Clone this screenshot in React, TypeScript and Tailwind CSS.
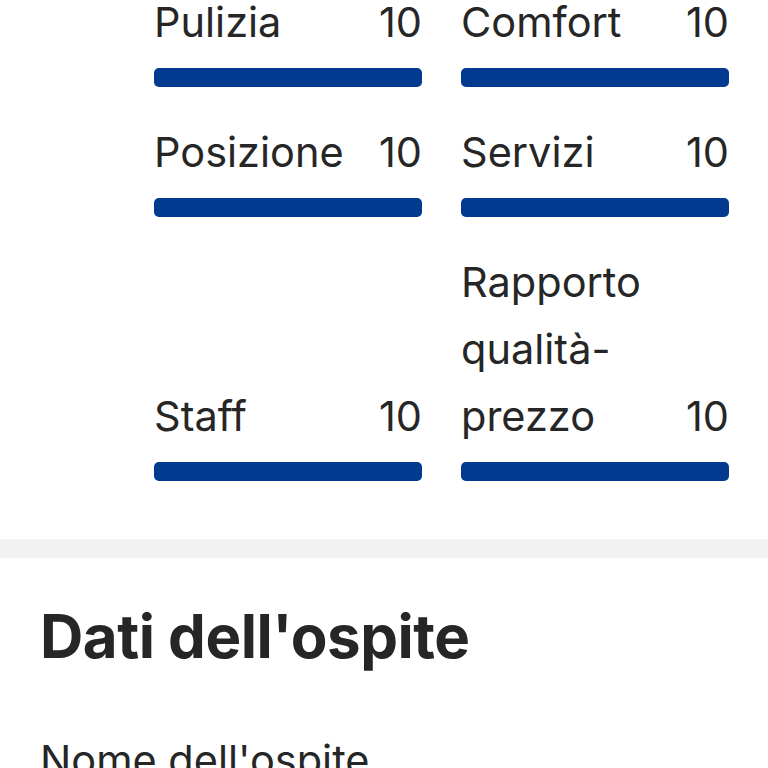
import React from "react";

type Score = { label: string; value: number };

const scores: Score[] = [
  { label: "Pulizia", value: 10 },
  { label: "Comfort", value: 10 },
  { label: "Posizione", value: 10 },
  { label: "Servizi", value: 10 },
  { label: "Staff", value: 10 },
  { label: "Rapporto qualità-prezzo", value: 10 },
];

function ScoreItem({ label, value }: Score) {
  return (
    <div className="flex flex-col justify-end">
      <div className="flex items-end justify-between gap-4 text-[41.5px] leading-[67px] text-[#262626]">
        <span className="break-words">{label}</span>
        <span className="shrink-0">{value}</span>
      </div>
      <div className="mt-[12px] h-[19px] w-full rounded-[5px] bg-[#e6e6e6]">
        <div className="h-full rounded-[5px] bg-[#023a8f]" style={{ width: `${value * 10}%` }} />
      </div>
    </div>
  );
}

export default function App() {
  return (
    <div
      className="min-h-[768px] overflow-hidden bg-white"
      style={{ fontFamily: "Inter, 'Noto Sans', sans-serif" }}
    >
      <section className="-mt-[11px] pl-[154px] pr-[39px]">
        <div className="grid grid-cols-2 gap-x-[39px] gap-y-[32px]">
          {scores.map((s) => (
            <ScoreItem key={s.label} {...s} />
          ))}
        </div>
      </section>

      <div className="mt-[58px] h-[19px] bg-[#f2f2f2]" />

      <section className="px-[40px] pt-[38px]">
        <h2 className="text-[60px] font-bold leading-[80px] tracking-[-0.5px] text-[#262626]">
          Dati dell'ospite
        </h2>
        <p className="mt-[56px] text-[41.5px] leading-[56px] text-[#262626]">Nome dell'ospite</p>
      </section>
    </div>
  );
}
